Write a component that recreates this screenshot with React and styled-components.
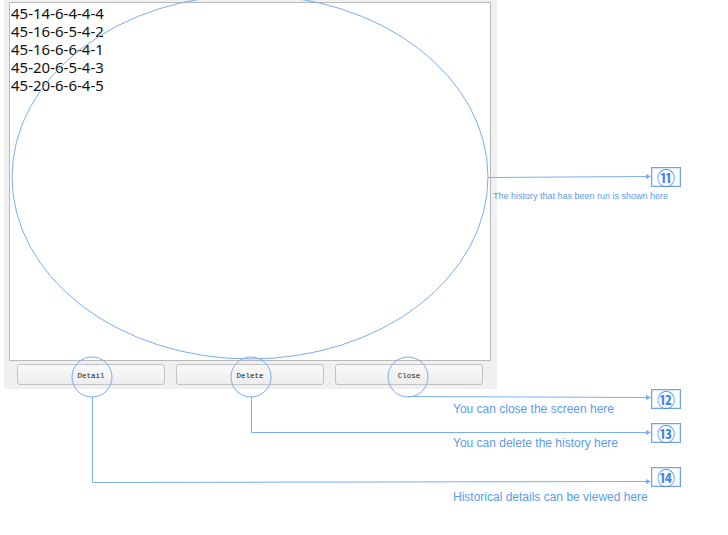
import React from 'react';
import styled, { createGlobalStyle } from 'styled-components';

const GlobalStyle = createGlobalStyle`
  html, body {
    margin: 0;
    padding: 0;
    background: #ffffff;
  }
  body {
    font-family: "Liberation Sans", Arial, sans-serif;
  }
`;

const Page = styled.div`
  position: relative;
  width: 728px;
  height: 535px;
  overflow: hidden;
  background: #ffffff;
`;

const Dialog = styled.div`
  margin-left: 4px;
  width: 493px;
  height: 389px;
  box-sizing: border-box;
  padding: 2px 6px 0 5px;
  background: #f0f0f0;
  display: flex;
  flex-direction: column;
`;

const ListBox = styled.ul`
  margin: 0;
  padding: 1px 0 0 1px;
  list-style: none;
  height: 359px;
  box-sizing: border-box;
  background: #ffffff;
  border: 1px solid #b9b9b9;
  font-family: "Noto Sans", "Open Sans", sans-serif;
  font-size: 15px;
  line-height: 18px;
  color: #111111;
`;

const ListItem = styled.li`
  white-space: nowrap;
`;

const ButtonRow = styled.div`
  margin-top: 3px;
  padding: 0 8px;
  display: flex;
  gap: 11px;
`;

const Button = styled.button`
  flex: 0 0 148px;
  height: 21px;
  padding: 2px 0 0;
  border: 1px solid #c2c2c2;
  border-radius: 3px;
  background: linear-gradient(#f9f9f9, #ededed);
  font-family: "Liberation Mono", "DejaVu Sans Mono", monospace;
  font-size: 7.5px;
  color: #222222;
  cursor: pointer;
`;

const Overlay = styled.svg`
  position: absolute;
  left: 0;
  top: 0;
  pointer-events: none;
`;

const NumberBox = styled.div`
  position: absolute;
  left: 651px;
  top: ${p => p.$top}px;
  width: 30px;
  height: 20px;
  box-sizing: border-box;
  border: 1px solid #6fa3ee;
  box-shadow: inset 0 0 0 1px #d6e6fb;
  display: flex;
  align-items: center;
  justify-content: center;
  font-family: "Noto Sans CJK SC", "DejaVu Sans", sans-serif;
  font-size: 18px;
  font-weight: 700;
  color: #3d86ee;
  line-height: 1;
`;

const Note = styled.div`
  position: absolute;
  left: ${p => p.$left}px;
  top: ${p => p.$top}px;
  font-family: "Liberation Sans", Arial, sans-serif;
  font-size: ${p => p.$size}px;
  color: #5b9bef;
  white-space: nowrap;
  line-height: 1;
`;

const items = ['45-14-6-4-4-4', '45-16-6-5-4-2', '45-16-6-6-4-1', '45-20-6-5-4-3', '45-20-6-6-4-5'];

const LINE = '#7aaef2';

function Arrow({ x, y }) {
  return <polygon points={`${x},${y} ${x - 5},${y - 2.5} ${x - 5},${y + 2.5}`} fill={LINE} />;
}

export default function App() {
  return (
    <Page>
      <GlobalStyle />
      <Dialog>
        <ListBox>
          {items.map(t => (
            <ListItem key={t}>{t}</ListItem>
          ))}
        </ListBox>
        <ButtonRow>
          <Button>Detail</Button>
          <Button>Delete</Button>
          <Button>Close</Button>
        </ButtonRow>
      </Dialog>

      <Overlay width="728" height="535" viewBox="0 0 728 535">
        <g fill="none" stroke={LINE} strokeWidth="1">
          <ellipse cx="250" cy="177" rx="238" ry="182" />
          <circle cx="92" cy="377" r="20" />
          <circle cx="251" cy="377" r="20" />
          <circle cx="408" cy="377" r="20" />
          <polyline points="488.5,177.5 646,176.5" />
          <polyline points="408,396.5 646,397.5" />
          <polyline points="251.5,397 251.5,432.5 646,432.5" />
          <polyline points="92.5,397 92.5,482.5 646,481.5" />
        </g>
        <Arrow x={651} y={176.5} />
        <Arrow x={651} y={397.5} />
        <Arrow x={651} y={432.5} />
        <Arrow x={651} y={481.5} />
      </Overlay>

      <NumberBox $top={167}>⑪</NumberBox>
      <Note $left={493} $top={192} $size={9}>The history that has been run is shown here</Note>

      <NumberBox $top={389}>⑫</NumberBox>
      <Note $left={453} $top={403} $size={12}>You can close the screen here</Note>

      <NumberBox $top={423}>⑬</NumberBox>
      <Note $left={453} $top={437} $size={12}>You can delete the history here</Note>

      <NumberBox $top={467}>⑭</NumberBox>
      <Note $left={453} $top={491} $size={12}>Historical details can be viewed here</Note>
    </Page>
  );
}
